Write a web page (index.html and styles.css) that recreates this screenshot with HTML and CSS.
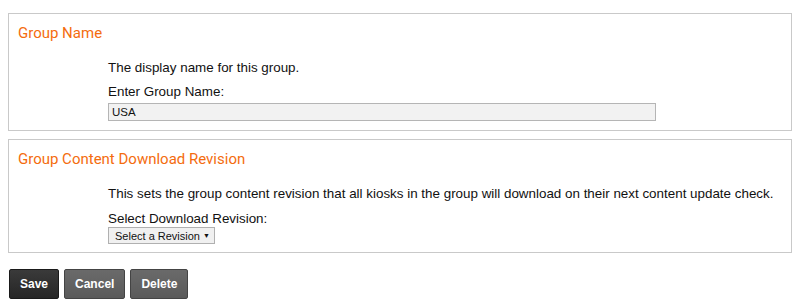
FILE: index.html
```html
<!DOCTYPE html>
<html lang="en">
  <head>
    <meta charset="UTF-8" />
    <title>Edit Group</title>
    <link rel="stylesheet" href="styles.css">
  </head>
  <body>
    <div class="panel panel-name">
      <h3>Group Name</h3>
      <div class="field">
        <p class="help">The display name for this group.</p>
        <label for="groupName">Enter Group Name:</label>
        <input id="groupName" class="text-input" type="text" value="USA" />
      </div>
    </div>
    <div class="panel panel-revision">
      <h3>Group Content Download Revision</h3>
      <div class="field">
        <p class="help">This sets the group content revision that all kiosks in the group will download on their next content update check.</p>
        <label for="revision">Select Download Revision:</label>
        <div class="select-box" id="revision">
          <span>Select a Revision</span>
          <span class="arrow">&#9660;</span>
        </div>
      </div>
    </div>
    <div class="actions">
      <button class="btn btn-primary">Save</button>
      <button class="btn">Cancel</button>
      <button class="btn">Delete</button>
    </div>
  </body>
</html>
```

FILE: styles.css
```css
html {
  font-family: "Liberation Sans", Arial, sans-serif;
  font-size: 13.4px;
  color: #111;
  background: #fff;
}
body {
  margin: 13px 9px 8px 8px;
}
.panel {
  border: 1px solid #c9c9c9;
  padding: 9px 9px 9px;
  margin-bottom: 8px;
}
.panel-revision {
  padding-bottom: 8px;
}
.panel h3 {
  margin: 0;
  font-family: Roboto, sans-serif;
  font-weight: normal;
  font-size: 15px;
  color: #f46c0e;
  line-height: 20px;
}
.field {
  display: flex;
  flex-direction: column;
  align-items: flex-start;
  padding-left: 90px;
  margin-top: 17px;
}
.help {
  margin: 0 0 8px;
  line-height: 16px;
}
label {
  line-height: 16px;
}
.panel-name label {
  margin-bottom: 3px;
}
.panel-revision .help {
  margin-bottom: 9px;
}
.text-input {
  box-sizing: border-box;
  width: 548px;
  height: 18px;
  margin: 0;
  padding: 0 3px;
  border: 1px solid #b5b5b5;
  background: #f2f2f2;
  font-family: "Liberation Sans", Arial, sans-serif;
  font-size: 11.5px;
  color: #111;
}
.select-box {
  box-sizing: border-box;
  width: 107px;
  height: 17px;
  display: flex;
  align-items: center;
  justify-content: space-between;
  padding: 0 4px 0 6px;
  border: 1px solid #b0b0b0;
  background: #f0f0f0;
  font-size: 11px;
}
.select-box .arrow {
  font-size: 7px;
}
.actions {
  display: flex;
  gap: 5px;
  margin-top: 16px;
  padding-left: 1px;
}
.btn {
  height: 30px;
  padding: 0 10px;
  border: 1px solid #444;
  border-radius: 2px;
  background: linear-gradient(#6a6a6a, #5a5a5a);
  color: #fff;
  font-family: "Liberation Sans", Arial, sans-serif;
  font-weight: bold;
  font-size: 12px;
}
.btn-primary {
  background: linear-gradient(#3a3a3a, #262626);
  border-color: #1a1a1a;
}
```
